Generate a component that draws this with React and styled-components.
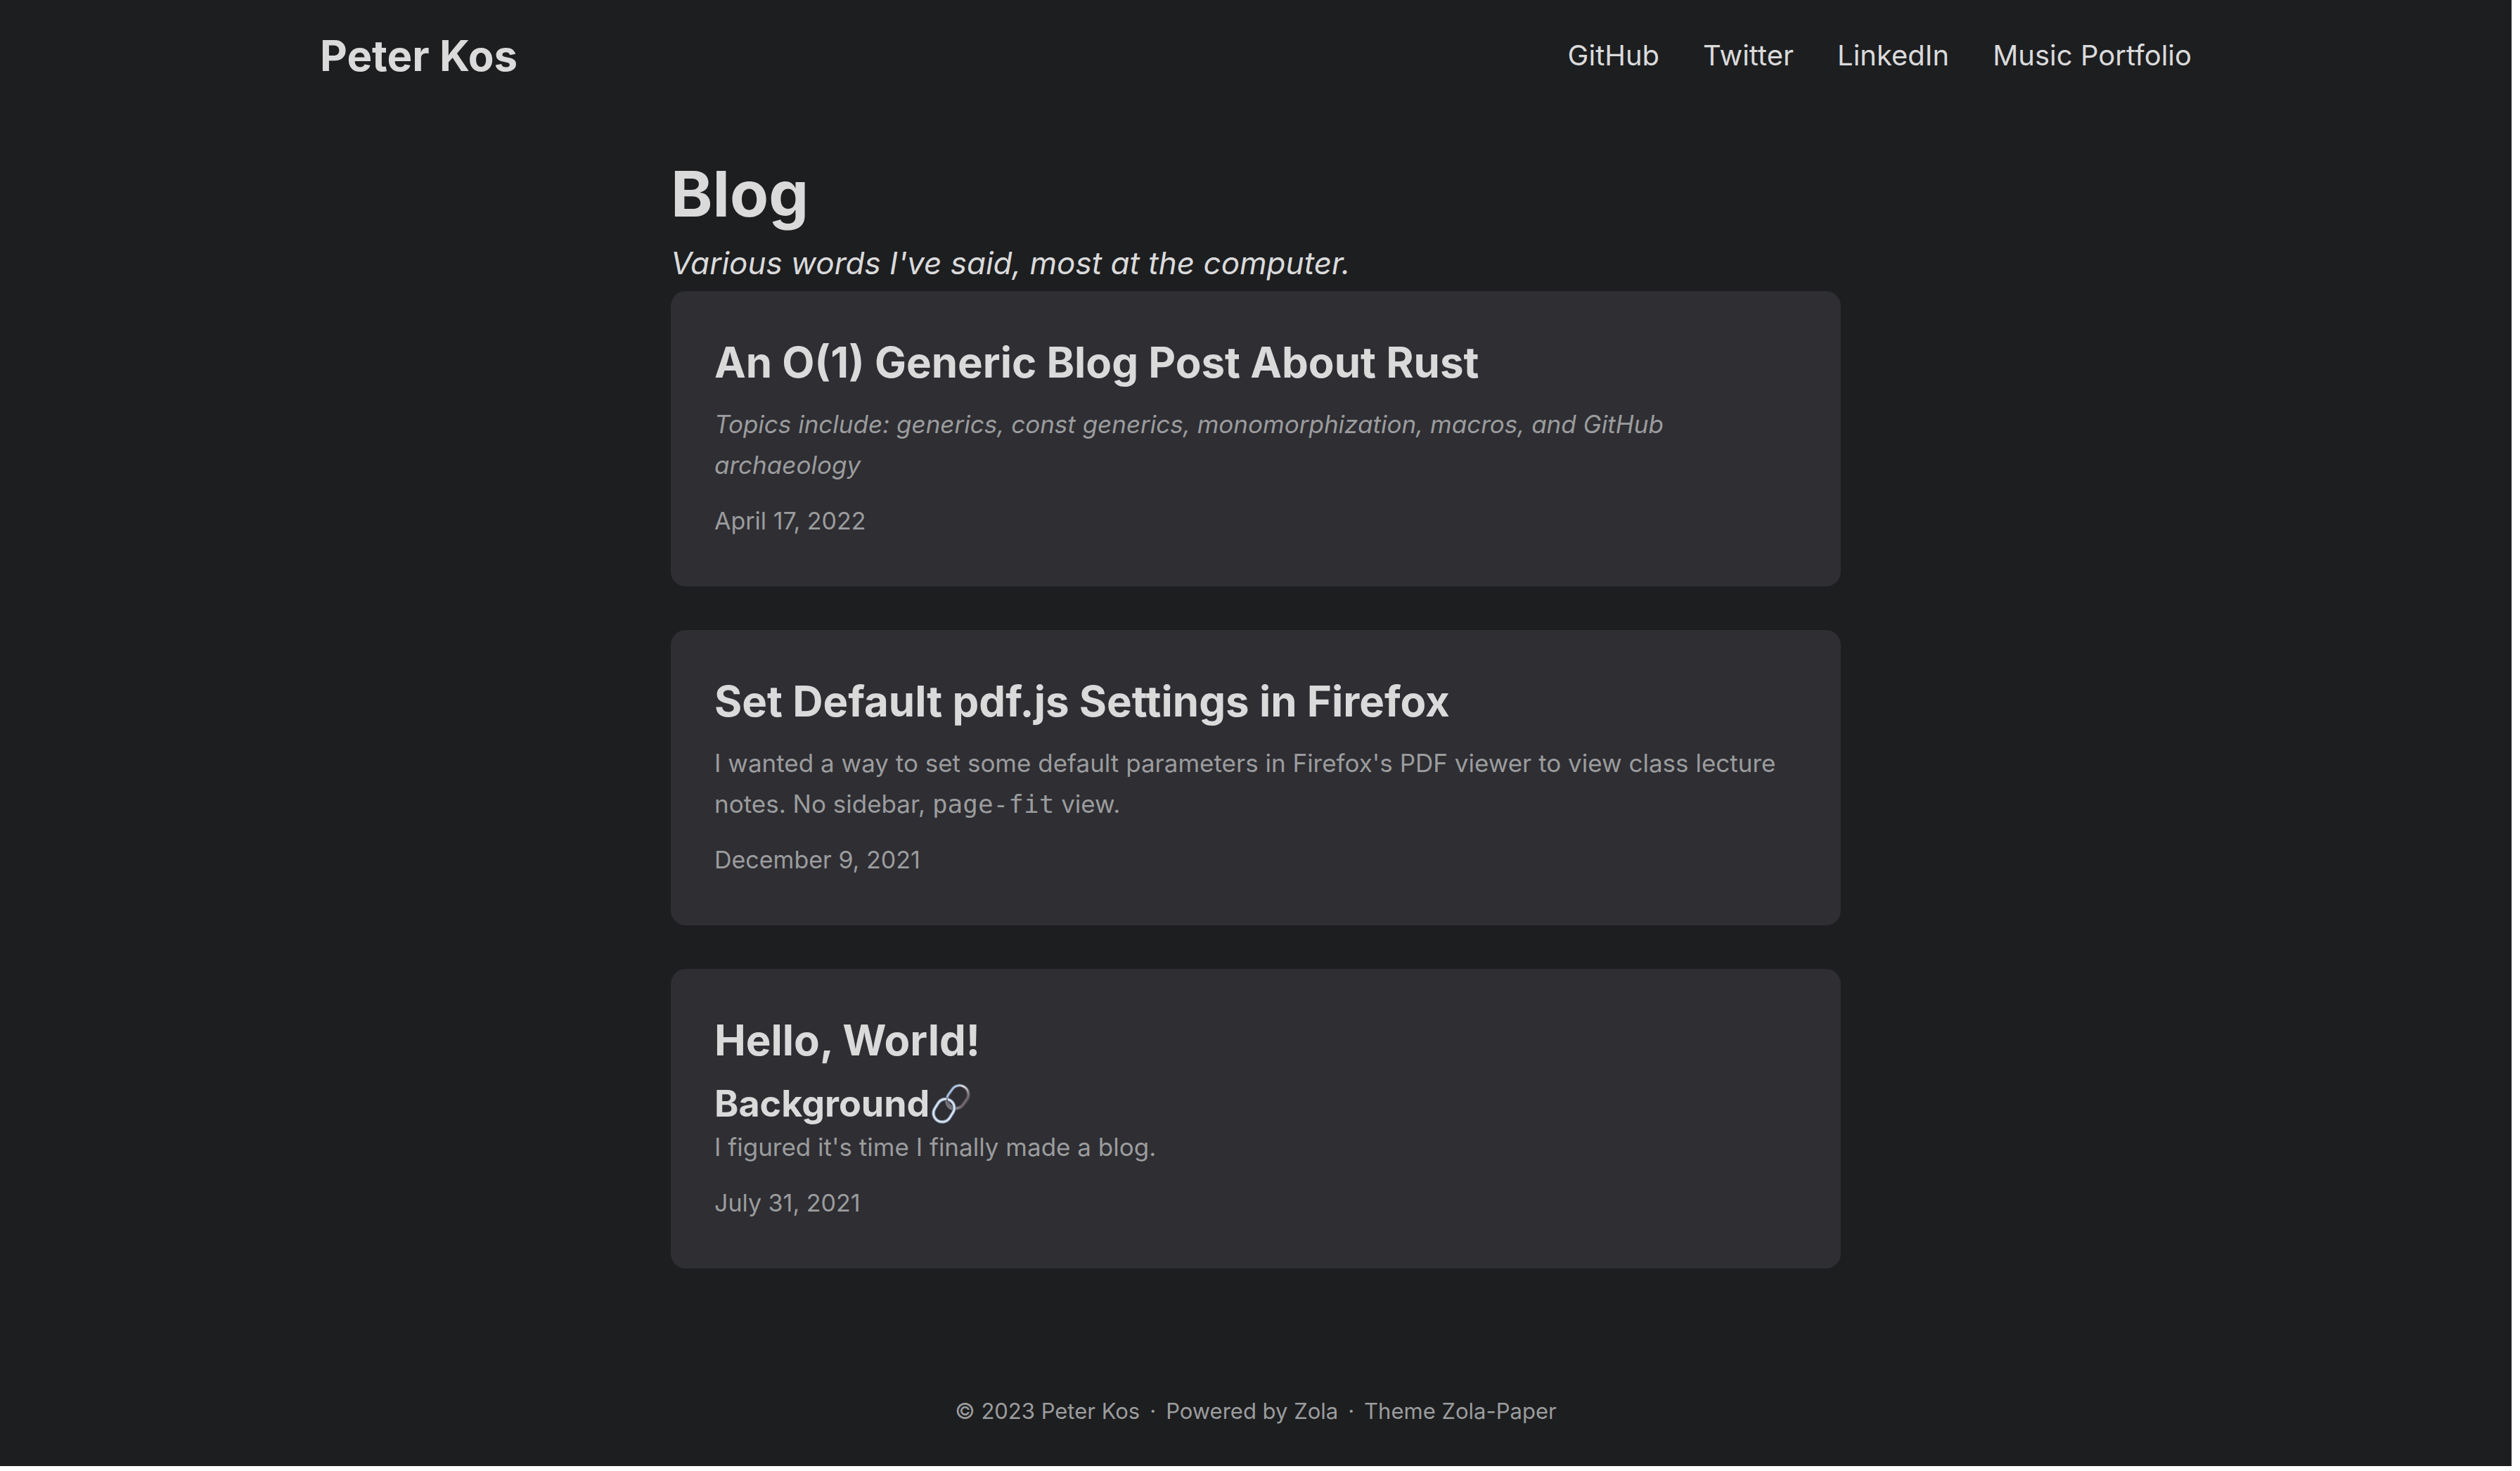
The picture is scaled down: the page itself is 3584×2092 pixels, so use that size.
import React from 'react';
import styled, { createGlobalStyle } from 'styled-components';

const color = {
  theme: '#1d1e20',
  entry: '#2e2e33',
  primary: '#dadadb',
  secondary: '#9b9c9d',
};

const GlobalStyle = createGlobalStyle`
  * { box-sizing: border-box; margin: 0; padding: 0; }
  body { background: #ffffff; }
  a { color: inherit; text-decoration: none; }
`;

const Page = styled.div`
  display: flex;
  flex-direction: column;
  min-height: calc(100vh - 7px);
  margin: 0 12px 7px 0;
  background: ${color.theme};
  color: ${color.primary};
  font-family: Inter, 'Liberation Sans', sans-serif;
`;

const Header = styled.header`
  display: flex;
  align-items: center;
  justify-content: space-between;
  width: 100%;
  max-width: 2786px;
  height: 158px;
  margin: 0 auto;
  padding: 0 62px;
`;

const Logo = styled.a`
  font-size: 60px;
  line-height: 156px;
  font-weight: 700;
`;

const Menu = styled.ul`
  display: flex;
  gap: 62px;
  list-style: none;
  font-size: 40px;
  line-height: 156px;
`;

const Main = styled.main`
  flex: 1;
  width: 100%;
  max-width: 1788px;
  margin: 0 auto;
  padding: 60px 62px;
`;

const PageTitle = styled.h1`
  font-size: 90px;
  line-height: 116px;
  font-weight: 700;
`;

const Description = styled.p`
  font-size: 44px;
  line-height: 80px;
  font-style: italic;
`;

const Entry = styled.article`
  margin-bottom: 62px;
  padding: 62px;
  border-radius: 21px;
  background: ${color.entry};
`;

const EntryTitle = styled.h2`
  margin-bottom: 20px;
  font-size: 60px;
  line-height: 78px;
  font-weight: 700;
`;

const Summary = styled.div`
  margin-bottom: 20px;
  color: ${color.secondary};
  font-size: 35px;
  line-height: 58px;

  code {
    font-family: 'DejaVu Sans Mono', monospace;
    font-size: 36px;
    line-height: 1;
  }
`;

const SummaryHeading = styled.h3`
  display: flex;
  align-items: center;
  color: ${color.primary};
  font-size: 52px;
  line-height: 64px;
  font-weight: 700;
`;

const EntryDate = styled.time`
  display: block;
  color: ${color.secondary};
  font-size: 34px;
  line-height: 62px;
`;

const Footer = styled.footer`
  display: flex;
  justify-content: center;
  gap: 14px;
  height: 156px;
  color: ${color.secondary};
  font-size: 31px;
  line-height: 156px;
`;

const LinkDrawing = styled.svg`
  display: block;
  width: 60px;
  height: 60px;
`;

function ChainLink() {
  return (
    <LinkDrawing viewBox="0 0 60 60" fill="none" role="img" aria-label="Link">
      <defs>
        <linearGradient id="steel" x1="0" y1="0" x2="1" y2="0">
          <stop offset="0" stopColor="#9fc0e6" />
          <stop offset="0.4" stopColor="#dde2ea" />
          <stop offset="0.75" stopColor="#a2a2aa" />
          <stop offset="1" stopColor="#6c6467" />
        </linearGradient>
      </defs>
      <g transform="rotate(36 40 20)">
        <rect x="27.5" y="3" width="25" height="34" rx="12.5" stroke="#56565b" strokeWidth="5" />
        <rect x="27.5" y="3" width="25" height="34" rx="12.5" stroke="url(#steel)" strokeWidth="3" />
        <rect x="29.5" y="5" width="21" height="30" rx="10.5" stroke="#48383c" strokeWidth="1" />
      </g>
      <g transform="rotate(32 20 39)">
        <rect x="8" y="22" width="25" height="34" rx="12.5" stroke="#55565b" strokeWidth="5" />
        <rect x="8" y="22" width="25" height="34" rx="12.5" stroke="#8fadd0" strokeWidth="4" />
        <rect x="8" y="22" width="25" height="34" rx="12.5" stroke="#e6e8ec" strokeWidth="2" />
      </g>
      <path d="M24 24 C24 31 27 35 32 37" stroke="#77787e" strokeWidth="4" />
      <path d="M25 22 C25 28 28 33 33 35" stroke="#3d3236" strokeWidth="1" />
    </LinkDrawing>
  );
}

const menu = ['GitHub', 'Twitter', 'LinkedIn', 'Music Portfolio'];

const posts = [
  {
    title: 'An O(1) Generic Blog Post About Rust',
    summary: (
      <p>
        <em>
          Topics include: generics, const generics, monomorphization, macros, and GitHub
          archaeology
        </em>
      </p>
    ),
    date: 'April 17, 2022',
    iso: '2022-04-17',
  },
  {
    title: 'Set Default pdf.js Settings in Firefox',
    summary: (
      <p>
        I wanted a way to set some default parameters in Firefox's PDF viewer to view class
        lecture notes. No sidebar, <code>page-fit</code> view.
      </p>
    ),
    date: 'December 9, 2021',
    iso: '2021-12-09',
  },
  {
    title: 'Hello, World!',
    summary: (
      <>
        <SummaryHeading>
          Background
          <a href="#background">
            <ChainLink />
          </a>
        </SummaryHeading>
        <p>I figured it's time I finally made a blog.</p>
      </>
    ),
    date: 'July 31, 2021',
    iso: '2021-07-31',
  },
];

export default function App() {
  return (
    <>
      <GlobalStyle />
      <Page>
        <Header>
          <Logo href="#">Peter Kos</Logo>
          <nav>
            <Menu>
              {menu.map((item) => (
                <li key={item}>
                  <a href="#">{item}</a>
                </li>
              ))}
            </Menu>
          </nav>
        </Header>
        <Main>
          <PageTitle>Blog</PageTitle>
          <Description>Various words I've said, most at the computer.</Description>
          {posts.map((post) => (
            <Entry key={post.iso}>
              <EntryTitle>
                <a href="#">{post.title}</a>
              </EntryTitle>
              <Summary>{post.summary}</Summary>
              <EntryDate dateTime={post.iso}>{post.date}</EntryDate>
            </Entry>
          ))}
        </Main>
        <Footer>
          <span>© 2023 Peter Kos</span>
          <span>·</span>
          <span>
            Powered by <a href="#">Zola</a>
          </span>
          <span>·</span>
          <span>
            Theme <a href="#">Zola-Paper</a>
          </span>
        </Footer>
      </Page>
    </>
  );
}
